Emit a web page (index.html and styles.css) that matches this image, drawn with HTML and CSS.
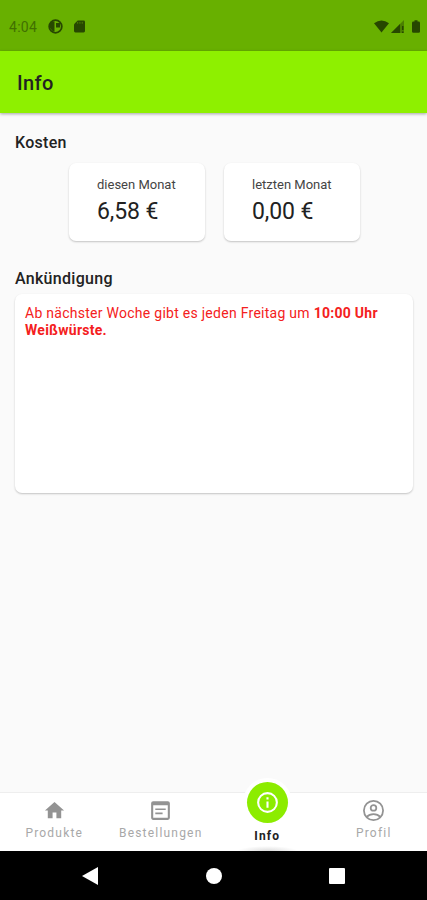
FILE: index.html
```html
<!DOCTYPE html>
<html lang="de">
<head>
<meta charset="utf-8">
<meta name="viewport" content="width=device-width, initial-scale=1">
<title>Info</title>
<link rel="stylesheet" href="styles.css">
</head>
<body>
<div class="screen">
  <div class="status">
    <span class="clock">4:04</span>
    <svg class="app-dot" width="15" height="15" viewBox="0 0 15 15"><circle cx="7.500" cy="7.500" r="6.300" fill="none" stroke="currentColor" stroke-width="1.800"/><path d="M3 2.500h3.500v10H5L2 9V5zM8 4h4v4.500H8z" fill="currentColor"/></svg>
    <svg class="sd" width="11" height="13" viewBox="0 0 12 13"><path d="M4 0h6.500Q12 0 12 1.500v10q0 1.500-1.500 1.500h-9Q0 13 0 11.500V4z" fill="currentColor"/><path d="M4 1.500v2M6.500 1.500v2M9 1.500v2" stroke="#4d8200"/></svg>
    <span class="spacer"></span>
    <svg class="wifi" width="15" height="13" viewBox="0 0 16 13"><path d="M0 3Q8-3 16 3L8 13z" fill="currentColor"/></svg>
    <svg class="signal" width="13" height="13" viewBox="0 0 13 13"><path d="M13 0v13H0z" fill="currentColor" opacity=".45"/><path d="M9 4v9H0zM11 6h1.500v4H11zM11 11.500h1.500V13H11z" fill="currentColor"/></svg>
    <svg class="battery" width="8" height="13" viewBox="0 0 9 14"><path d="M2.800 0h3.400v1.500H7.500Q9 1.500 9 3v9.500Q9 14 7.500 14h-6Q0 14 0 12.500V3q0-1.500 1.500-1.500h1.300z" fill="currentColor"/></svg>
  </div>
  <header class="appbar"><h1>Info</h1></header>
  <main>
    <h2>Kosten</h2>
    <div class="costs">
      <section class="card cost"><span class="label">diesen Monat</span><span class="amount">6,58 €</span></section>
      <section class="card cost"><span class="label">letzten Monat</span><span class="amount">0,00 €</span></section>
    </div>
    <h2 class="news-title">Ankündigung</h2>
    <section class="card news">Ab nächster Woche gibt es jeden Freitag um <b>10:00 Uhr</b><br><b>Weißwürste.</b></section>
  </main>
  <nav class="tabs">
    <a class="tab">
      <svg width="23" height="24" viewBox="0 0 24 24"><path d="M10 20v-6h4v6h5v-8h3L12 3 2 12h3v8z" fill="currentColor"/></svg>
      <span>Produkte</span>
    </a>
    <a class="tab">
      <svg width="25" height="24" viewBox="0 0 24 24"><path d="M19 3H5a2 2 0 0 0-2 2v14c0 1.100.9 2 2 2h14a2 2 0 0 0 2-2V5a2 2 0 0 0-2-2zm0 16H5V7h14v12zM7 10h10v1.500H7zm0 4h7v1.500H7z" fill="currentColor"/></svg>
      <span>Bestellungen</span>
    </a>
    <a class="tab active">
      <i class="bubble"><svg width="25" height="25" viewBox="0 0 24 24"><path d="M11 7h2v2h-2zm0 4h2v6h-2zm1-9a10 10 0 1 0 0 20 10 10 0 0 0 0-20zm0 18a8 8 0 1 1 0-16 8 8 0 0 1 0 16z" fill="currentColor"/></svg></i>
      <span>Info</span>
    </a>
    <a class="tab">
      <svg width="25" height="25" viewBox="0 0 24 24"><g fill="none" stroke="currentColor" stroke-width="1.700"><circle cx="12" cy="12" r="9.200"/><circle cx="12" cy="9.500" r="2.700"/><path d="M5.500 18.200c3.200-3.600 9.800-3.600 13 0"/></g></svg>
      <span>Profil</span>
    </a>
  </nav>
  <footer class="system">
    <svg width="16" height="18" viewBox="0 0 16 18"><path d="M16 0v18L0 9z" fill="#fff"/></svg>
    <svg width="16" height="16" viewBox="0 0 16 16"><circle cx="8" cy="8" r="8" fill="#fff"/></svg>
    <svg width="16" height="16" viewBox="0 0 16 16"><rect width="16" height="16" rx="1" fill="#fff"/></svg>
  </footer>
</div>
</body>
</html>
```
FILE: styles.css
```css
* { box-sizing: border-box; }
body { margin: 0; font-family: Roboto, sans-serif; color: #222; }
.screen { width: 427px; height: 900px; display: flex; flex-direction: column; background: #fafafa; overflow: hidden; }
svg { display: block; flex: none; }

.status { height: 51px; flex: none; display: flex; align-items: center; padding: 2px 7px 0 9px; background: #68b000; color: #274700; }
.clock { font-size: 14px; letter-spacing: .3px; color: #417000; }
.app-dot { margin-left: 11px; }
.sd { margin-left: 11px; }
.spacer { flex: 1; }
.signal { margin-left: 2px; }
.battery { margin-left: 8px; }

.appbar { height: 62px; flex: none; display: flex; align-items: center; padding: 2px 17px 0; background: #8ef000; box-shadow: 0 1px 3px rgba(0, 0, 0, .35); }
h1 { margin: 0; font-size: 20px; font-weight: 500; line-height: 24px; letter-spacing: .4px; }

main { flex: 1; padding: 20px 14px 0 15px; }
h2 { margin: 0; font-size: 16px; font-weight: 500; line-height: 19px; letter-spacing: .3px; }
.card { background: #fff; border-radius: 7px; box-shadow: 0 1px 2px rgba(0, 0, 0, .22); }
.costs { display: flex; gap: 19px; margin: 11px 0 0 54px; }
.cost { width: 136px; height: 78px; padding: 13px 0 0 28px; display: flex; flex-direction: column; }
.label { font-size: 13px; line-height: 17px; color: #444; }
.amount { font-size: 23px; line-height: 27px; margin-top: 5px; letter-spacing: -.1px; }
.news-title { margin-top: 28px; }
.news { height: 199px; margin-top: 6px; padding: 11px 0 0 10px; font-size: 14px; line-height: 17px; letter-spacing: .27px; color: #f42020; white-space: nowrap; }

.tabs { height: 59px; flex: none; display: grid; grid-template-columns: repeat(4, 1fr); background: #fff; border-top: 1px solid #eee; padding-left: 1px; }
.tab { display: flex; flex-direction: column; align-items: center; padding-top: 5px; color: #939393; }
.tab svg { height: 25px; }
.tab span { font-size: 12px; line-height: 16px; letter-spacing: 1.2px; margin-top: 2px; color: #a8a8a8; white-space: nowrap; }
.active { padding: 0; background: radial-gradient(ellipse 30px 5px at 50% 100%, #ddd, #fff); }
.bubble { width: 41px; height: 41px; margin-top: -11px; border-radius: 50%; background: #8cec00; color: #fff; display: flex; align-items: center; justify-content: center; box-shadow: 0 0 0 4px #fff; }
.tab.active span { margin-top: 5px; color: #222; font-weight: 700; }

.system { height: 49px; flex: none; display: flex; align-items: center; justify-content: space-between; padding: 0 82px; background: #000; }
```
